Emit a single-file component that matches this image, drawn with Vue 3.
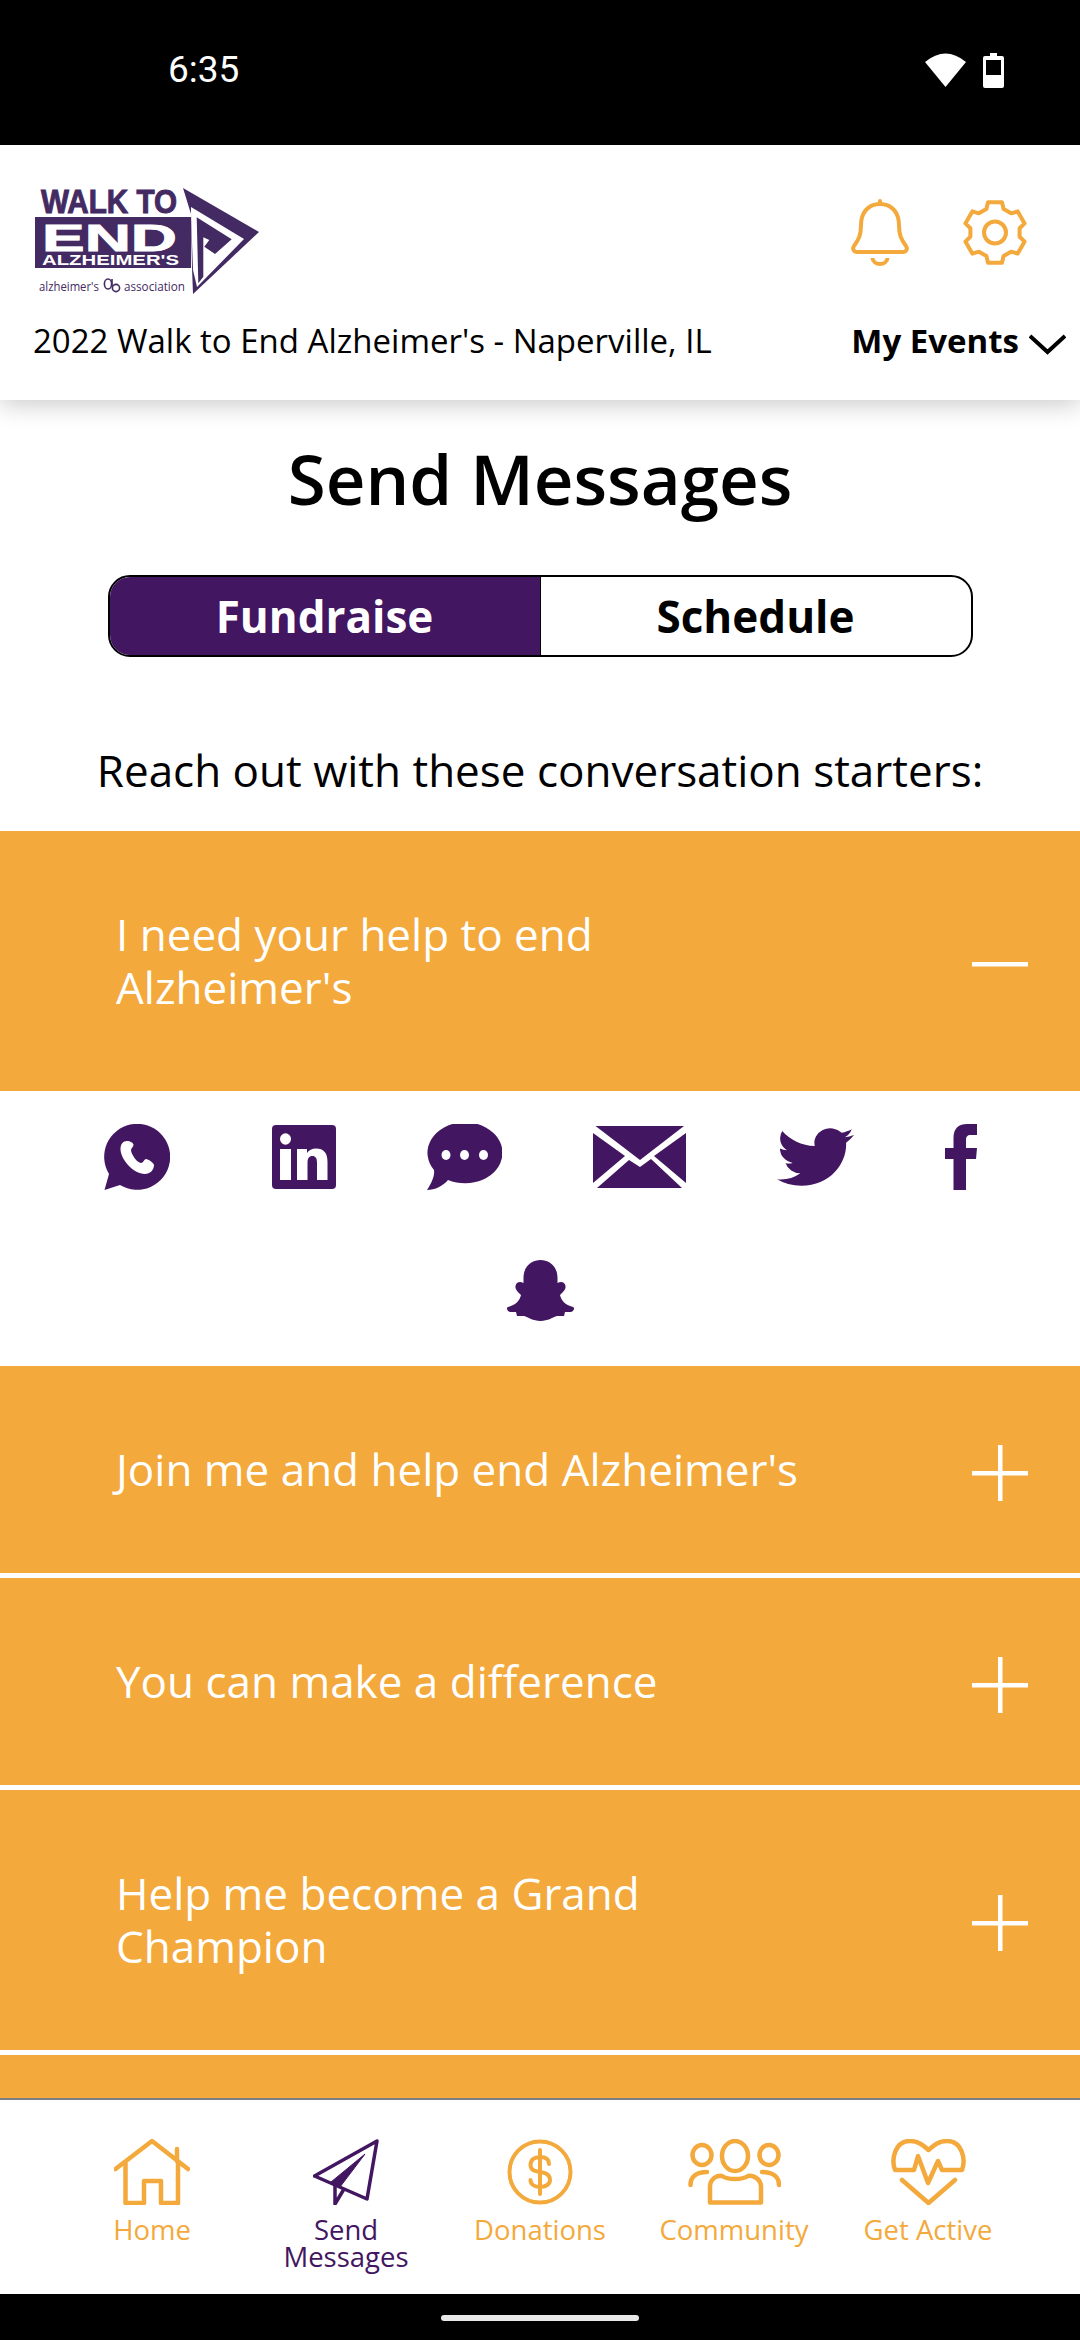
<script setup>
const rows = ["Join me and help end Alzheimer's", 'You can make a difference', 'Help me become a Grand Champion']

const gearPath = (() => {
  const cx = 33, cy = 33
  const pts = []
  for (let i = 0; i < 6; i++) {
    const a = (-90 + i * 60) * Math.PI / 180
    const add = (r, d) => {
      const t = a + d * Math.PI / 180
      pts.push((cx + r * Math.cos(t)).toFixed(1) + ' ' + (cy + r * Math.sin(t)).toFixed(1))
    }
    add(25, -20); add(31, -13); add(31, 13); add(25, 20)
  }
  return 'M' + pts.join(' L') + ' Z'
})()
</script>

<template>
  <div class="phone">
    <div class="statusbar">
      <span class="time">6:35</span>
      <div class="status-icons">
        <svg width="41" height="34" viewBox="0 0 41 34"><path d="M0 9 Q20.5 -8 41 9 L20.5 34 Z" fill="#fff"/></svg>
        <svg width="21" height="35" viewBox="0 0 21 35"><path d="M7 0 H14 V3 H19 Q21 3 21 5 V33 Q21 35 19 35 H2 Q0 35 0 33 V5 Q0 3 2 3 H7 Z" fill="#fff"/><rect x="3" y="7" width="15" height="15" fill="#000"/></svg>
      </div>
    </div>

    <header class="header">
      <div class="header-top">
        <svg class="logo" width="232" height="112" viewBox="30 185 232 112">
          <text x="41" y="213" class="l-walk" textLength="136" lengthAdjust="spacingAndGlyphs">WALK TO</text>
          <rect x="35" y="217" width="156" height="51" fill="#432a63"/>
          <text x="42" y="250.5" class="l-end" textLength="135" lengthAdjust="spacingAndGlyphs">END</text>
          <text x="42" y="265" class="l-alz" textLength="137" lengthAdjust="spacingAndGlyphs">ALZHEIMER'S</text>
          <text x="39" y="291" class="l-assoc" textLength="60" lengthAdjust="spacingAndGlyphs">alzheimer's</text>
          <g fill="none" stroke="#432a63" stroke-width="1.6"><ellipse cx="108" cy="284" rx="3.6" ry="5"/><circle cx="116" cy="288" r="3.6"/><path d="M112 279 V286"/></g>
          <text x="124" y="291" class="l-assoc" textLength="61" lengthAdjust="spacingAndGlyphs">association</text>
          <polygon points="183,188 259,232 193,294 192,268 191,214" fill="#432a63"/>
          <polygon points="191,207 244,239 197,287 193,270 191,214" fill="#fff"/>
          <polygon points="196.7,217.3 231.7,239.3 215,254 204.3,246.7 209.3,240 203.3,237.3 203.3,276.7 198.3,283.3" fill="#432a63"/>
        </svg>
        <div class="header-icons">
          <svg width="58" height="67" viewBox="0 0 58 67" fill="none" stroke="#f3a93c" stroke-width="4" stroke-linecap="round" stroke-linejoin="round">
            <path d="M29 2 V5 M29 5 C16 5 10 15 10 26 C10 36 8 40 3 47 C1 50 3 53 6 53 H52 C55 53 57 50 55 47 C50 40 48 36 48 26 C48 15 42 5 29 5 Z"/>
            <path d="M21.500 59 C22 67 36 67 36.500 59" stroke-linecap="butt"/>
          </svg>
          <svg width="66" height="67" viewBox="0 0 66 66" fill="none" stroke="#f3a93c" stroke-width="4" stroke-linejoin="round">
            <path :d="gearPath"/>
            <circle cx="33" cy="33" r="11"/>
          </svg>
        </div>
      </div>
      <div class="header-bottom">
        <span class="event">2022 Walk to End Alzheimer's - Naperville, IL</span>
        <span class="my-events">My Events
          <svg width="37" height="21" viewBox="0 0 37 21" fill="none" stroke="#000" stroke-width="4"><path d="M1 2 L18.500 18 L36 2"/></svg>
        </span>
      </div>
    </header>

    <main class="content">
      <h1 class="title">Send Messages</h1>
      <div class="toggle">
        <div class="seg seg-on">Fundraise</div>
        <div class="seg">Schedule</div>
      </div>
      <p class="lead">Reach out with these conversation starters:</p>

      <div class="acc acc-open">
        <span class="acc-text">I need your help to end Alzheimer's</span>
        <svg class="acc-icon" width="56" height="56" viewBox="0 0 56 56"><rect x="0" y="26" width="56" height="4.500" fill="#fff"/></svg>
      </div>

      <div class="shares">
        <svg class="share" width="66" height="66" viewBox="0 0 66 66">
          <path d="M0.500 66 L5 50 A33 33 0 1 1 16 61 Z" fill="#431661"/>
          <path d="M23 17 C19 17 16.500 20 16.500 25 C16.500 35 29 50 41 50 C46 50 50 46 50 41 C50 39 44 35 42 35 C40 35 39.500 39 37 39 C33 39 27 30 27 26 C27 24 29.500 23 29.500 21 C29.500 19 26 17 23 17 Z" fill="#fff"/>
        </svg>
        <svg class="share share-wide" width="64" height="64" viewBox="0 0 64 64">
          <rect width="64" height="64" rx="4" fill="#431661"/>
          <ellipse cx="13.500" cy="14" rx="5.500" ry="5.800" fill="#fff"/>
          <rect x="8" y="24" width="11" height="31" fill="#fff"/>
          <path d="M25 24 H35 V28 C37 25 40 23.500 44 23.500 C52 23.500 55.500 28 55.500 37 V55 H45 V38 C45 33 43.500 31 40.500 31 C37 31 35.500 33.500 35.500 38 V55 H25 Z" fill="#fff"/>
        </svg>
        <svg class="share" width="75" height="66" viewBox="0 0 75 66">
          <path d="M0 66 C4 60 8 52 7 46 A37.500 30.500 0 1 1 21 56 C16 62 8 66 0 66 Z" fill="#431661"/>
          <ellipse cx="19" cy="31" rx="4.500" ry="5" fill="#fff"/>
          <ellipse cx="37.500" cy="31" rx="4.500" ry="5" fill="#fff"/>
          <ellipse cx="56.500" cy="31" rx="4.500" ry="5" fill="#fff"/>
        </svg>
        <svg class="share" width="93" height="62" viewBox="0 0 93 62" fill="#431661">
          <polygon points="2.500,0 91,0 47,34"/>
          <polygon points="0,7 32,30 0,57"/>
          <polygon points="93,7 61,30 93,57"/>
          <polygon points="4,62 36,34 47,41 58,33 89,62"/>
        </svg>
        <svg class="share" width="77" height="62" viewBox="0 1.500 24 21" preserveAspectRatio="none">
          <path fill="#431661" d="M23.953 4.570a10 10 0 01-2.825.775 4.958 4.958 0 002.163-2.723c-.951.555-2.005.959-3.127 1.184a4.920 4.920 0 00-8.384 4.482C7.690 8.095 4.067 6.130 1.640 3.162a4.822 4.822 0 00-.666 2.475c0 1.710.870 3.213 2.188 4.096a4.904 4.904 0 01-2.228-.616v.060a4.923 4.923 0 003.946 4.827 4.996 4.996 0 01-2.212.085 4.936 4.936 0 004.604 3.417 9.867 9.867 0 01-6.102 2.105c-.390 0-.779-.023-1.170-.067a13.995 13.995 0 007.557 2.209c9.053 0 13.998-7.496 13.998-13.985 0-.210 0-.420-.015-.630A9.935 9.935 0 0024 4.590z"/>
        </svg>
        <svg class="share" width="32" height="66" viewBox="0 0 32 66">
          <path fill="#431661" d="M8.500 66 V35 H0 V24 H8.500 V14 C8.500 4 14 0 22 0 H32 V11 H26 C22 11 21 13 21 16 V24 H32 L31 35 H21 V66 Z"/>
        </svg>
        <svg class="share" width="67" height="61" viewBox="0 0 67 61">
          <path fill="#431661" d="M33.500 0 C41 0 50.500 5 50.500 18 L50.500 23 C54 21 58 22 58.500 26 C59 30 56 32 53 35 C54 40 58 45 66 47 C68 48 67 51 64 52 L58 52 L57 56 L50 56 C46 57 41 61 33.500 61 C26 61 21 57 17 56 L10 56 L9 52 L3 52 C0 51 -1 48 1 47 C9 45 13 40 14 35 C11 32 8 30 8.500 26 C9 22 13 21 16.500 23 L16.500 18 C16.500 5 26 0 33.500 0 Z"/>
        </svg>
      </div>

      <div v-for="r in rows" :key="r" class="acc">
        <span class="acc-text">{{ r }}</span>
        <svg class="acc-icon" width="56" height="56" viewBox="0 0 56 56"><rect x="0" y="26" width="56" height="4.500" fill="#fff"/><rect x="26" y="0" width="4.500" height="56" fill="#fff"/></svg>
      </div>
      <div class="acc"></div>
    </main>

    <nav class="nav">
      <div class="nav-item">
        <svg width="76" height="66" viewBox="0 0 76 66" fill="none" stroke="#f3a93c" stroke-width="4.500" stroke-linecap="round" stroke-linejoin="round">
          <path d="M1.500 30 L38 2 L74 30 M63 10 V22 M11.500 24 V64 H30 V42 H47 V64 H64 V22"/>
        </svg>
        <span>Home</span>
      </div>
      <div class="nav-item nav-active">
        <svg width="66" height="66" viewBox="0 0 66 66" fill="none" stroke="#431661" stroke-width="3.500" stroke-linejoin="round">
          <path d="M64 2 L1.500 37 L54 60 Z"/>
          <path d="M22 45 V65 L31 50"/>
          <path d="M52 15 L18 43 L27 48 Z" fill="#431661" stroke-width="1"/>
        </svg>
        <span>Send<br>Messages</span>
      </div>
      <div class="nav-item">
        <svg width="66" height="66" viewBox="0 0 66 66" fill="none" stroke="#f3a93c" stroke-width="4" stroke-linecap="round">
          <circle cx="33" cy="33" r="30.500"/>
          <path d="M42 25 C42 20 38 18 33 18 C27 18 23.500 21 23.500 26 C23.500 37 43 29 43 41 C43 45 39 48 33 48 C27 48 23.500 45 23.500 41 M33 11 V55"/>
        </svg>
        <span>Donations</span>
      </div>
      <div class="nav-item">
        <svg width="93" height="66" viewBox="0 0 93 66" fill="none" stroke="#f3a93c" stroke-width="4.500" stroke-linecap="round" stroke-linejoin="round">
          <ellipse cx="47" cy="17" rx="13" ry="15"/>
          <ellipse cx="14" cy="16" rx="9.500" ry="10"/>
          <ellipse cx="81" cy="16" rx="9.500" ry="10"/>
          <path d="M2.500 46 C2.500 38 8 33 19 33 M91 46 C91 38 85 33 74 33"/>
          <path d="M22 63.500 V48 C22 39 30 36 34 37 C40 41 54 41 60 37 C64 36 73 39 73 48 V63.500 Z"/>
        </svg>
        <span>Community</span>
      </div>
      <div class="nav-item">
        <svg width="75" height="66" viewBox="0 0 75 66" fill="none" stroke="#f3a93c" stroke-width="4.500" stroke-linecap="round" stroke-linejoin="round">
          <path d="M4 31 C0 20 4 2 19 2 C28 2 33 7 37.500 11 C42 7 47 2 56 2 C71 2 75 20 71 31 H51 L47 22 L37 44 L27 17 L23 31 Z"/>
          <path d="M11 41 L37.500 64 L64 41"/>
        </svg>
        <span>Get Active</span>
      </div>
    </nav>

    <div class="gesture"><div class="handle"></div></div>
  </div>
</template>

<style>
html, body { margin: 0; padding: 0; background: #fff; }
</style>

<style scoped>
.phone {
  width: 1080px;
  height: 2340px;
  display: flex;
  flex-direction: column;
  overflow: hidden;
  background: #fff;
  font-family: "Open Sans", sans-serif;
  color: #000;
}
.statusbar {
  height: 145px;
  flex: none;
  background: #000;
  display: flex;
  justify-content: space-between;
  align-items: flex-start;
  padding: 0 76px 0 168px;
  box-sizing: border-box;
}
.time {
  font-family: Roboto, sans-serif;
  font-size: 37px;
  font-weight: 400;
  color: #fff;
  line-height: 40px;
  margin-top: 50px;
}
.status-icons { display: flex; gap: 17px; align-items: flex-start; margin-top: 53px; }

.header {
  position: relative;
  z-index: 2;
  flex: none;
  height: 255px;
  box-sizing: border-box;
  background: #fff;
  box-shadow: 0 4px 24px rgba(0, 0, 0, 0.22);
  padding-top: 40px;
}
.header-top { display: flex; justify-content: space-between; align-items: flex-start; padding: 0 52px 0 30px; }
.logo { display: block; overflow: visible; }
.header-icons { display: flex; gap: 53px; margin-top: 14px; }
.header-bottom {
  display: flex;
  justify-content: space-between;
  align-items: center;
  padding: 21px 14px 0 33px;
}
.event { font-size: 33px; line-height: 46px; }
.my-events { font-size: 33px; line-height: 46px; font-weight: 700; display: flex; align-items: center; gap: 10px; }
.my-events svg { margin-top: 6px; }

.content { flex: 1; min-height: 0; overflow: hidden; background: #fff; }
.title {
  margin: 33px 0 0;
  text-align: center;
  font-size: 69px;
  line-height: 90px;
  font-weight: 600;
}
.toggle {
  width: 865px;
  height: 82px;
  margin: 52px auto 0;
  box-sizing: border-box;
  border: 2.500px solid #000;
  border-radius: 22px;
  overflow: hidden;
  display: flex;
}
.seg {
  flex: 1;
  display: flex;
  align-items: center;
  justify-content: center;
  font-size: 44px;
  font-weight: 700;
}
.seg-on { background: #431661; color: #fff; border-right: 1.500px solid #000; }
.lead {
  margin: 82px 0 0;
  text-align: center;
  font-size: 44px;
  line-height: 62px;
  color: #000;
}
.acc {
  background: #f3a93c;
  color: #fff;
  display: flex;
  align-items: center;
  justify-content: space-between;
  padding: 77px 52px 77px 116px;
  margin-bottom: 5px;
  font-size: 44px;
  line-height: 53px;
  min-height: 207px;
  box-sizing: border-box;
}
.acc-open { margin-top: 30px; margin-bottom: 0; }
.acc-text { width: 720px; }
.acc-icon { flex: none; margin: -6px 0 -12px; }

.shares {
  display: flex;
  flex-wrap: wrap;
  justify-content: center;
  align-items: center;
  column-gap: 91px;
  row-gap: 70px;
  padding: 33px 60px 40px;
  height: 275px;
  box-sizing: border-box;
  align-content: flex-start;
}
.share { display: block; }
.share-wide { margin-left: 11px; }

.nav {
  position: relative;
  z-index: 2;
  flex: none;
  height: 196px;
  box-sizing: border-box;
  background: #fff;
  border-top: 2px solid #7b7f85;
  display: grid;
  grid-template-columns: repeat(5, 194px);
  padding: 39px 55px 0;
}
.nav-item {
  display: flex;
  flex-direction: column;
  align-items: center;
  text-align: center;
  color: #f3a93c;
  font-size: 27.500px;
  line-height: 27px;
  gap: 11px;
}
.nav-item svg { display: block; flex: none; }
.nav-active { color: #431661; }
.gesture {
  flex: none;
  height: 46px;
  background: #000;
  display: flex;
  justify-content: center;
  padding-top: 21px;
  box-sizing: border-box;
}
.handle { width: 198px; height: 6px; border-radius: 3px; background: #e8e8e8; }

.l-walk { font: 700 33px "Liberation Sans", sans-serif; fill: #432a63; stroke: #432a63; stroke-width: 1; }
.l-end { font: 700 36px "Liberation Sans", sans-serif; fill: #fff; stroke: #fff; stroke-width: 0.8; }
.l-alz { font: 700 15px "Liberation Sans", sans-serif; fill: #fff; }
.l-assoc { font: 400 13px "Open Sans", sans-serif; fill: #432a63; }
</style>
